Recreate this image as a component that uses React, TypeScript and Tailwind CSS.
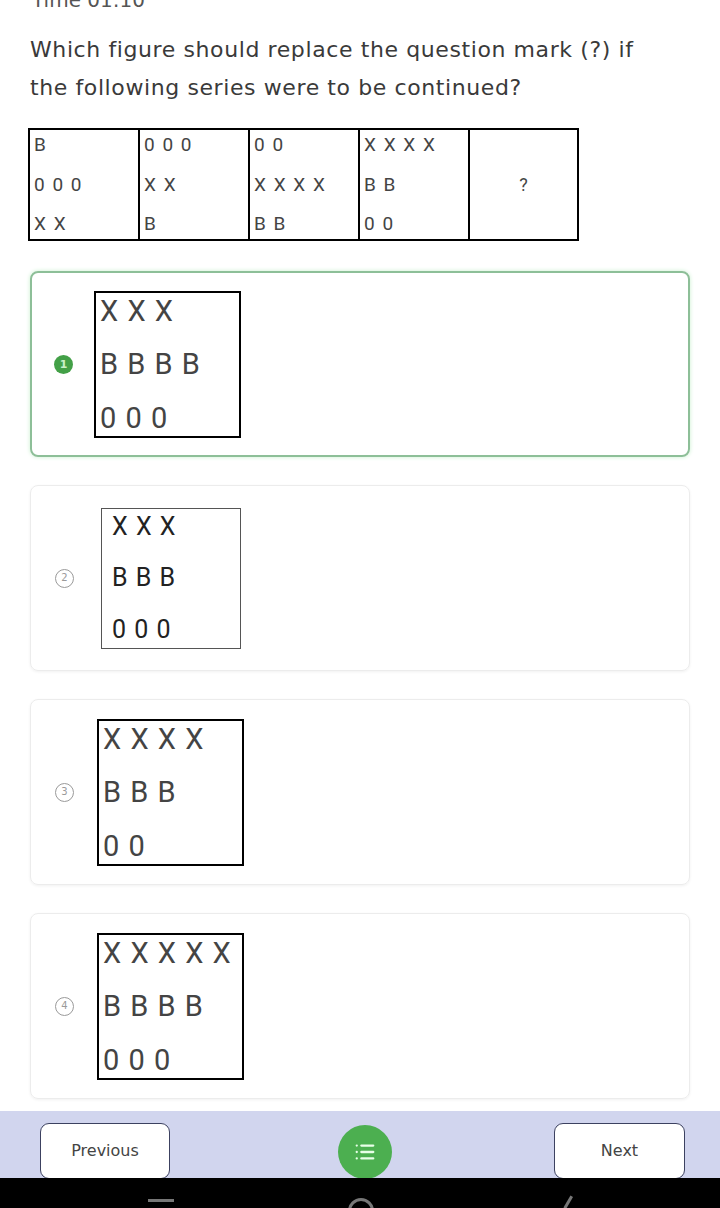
import { List } from "lucide-react";

const series = [
  ["B", "0 0 0", "X X"],
  ["0 0 0", "X X", "B"],
  ["0 0", "X X X X", "B B"],
  ["X X X X", "B B", "0 0"],
];

const options = [
  { n: 1, rows: ["X X X", "B B B B", "0 0 0"], selected: true },
  { n: 2, rows: ["X X X", "B B B", "0 0 0"], selected: false },
  { n: 3, rows: ["X X X X", "B B B", "0 0"], selected: false },
  { n: 4, rows: ["X X X X X", "B B B B", "0 0 0"], selected: false },
];

function Radio({ n, selected }: { n: number; selected: boolean }) {
  if (selected) {
    return (
      <div className="w-[19px] h-[19px] rounded-full bg-[#43a047] flex items-center justify-center text-[11px] font-bold text-[#c8f0c8] leading-none">
        {n}
      </div>
    );
  }
  return (
    <div className="w-[19px] h-[19px] rounded-full border-[1.5px] border-[#9a9a9a] flex items-center justify-center text-[10px] text-[#9a9a9a] leading-none">
      {n}
    </div>
  );
}

export default function App() {
  return (
    <div className="w-[720px] h-[1208px] bg-white flex flex-col overflow-hidden" style={{ fontFamily: "'DejaVu Sans', 'Noto Sans', sans-serif" }}>
      <div className="h-[8px] overflow-hidden pl-[32px]">
        <div className="-mt-[15px] text-[20px] text-[#555]">Time 01:10</div>
      </div>

      <p className="mt-[23px] pl-[30px] w-[660px] text-[22px] leading-[38px] text-[#3a3a3a] tracking-[0.6px]">
        Which figure should replace the question mark (?) if the following series were to be continued?
      </p>

      <div className="ml-[28px] mt-[21px] w-[551px] h-[113px] border-2 border-black flex" style={{ fontFamily: "Roboto, 'Liberation Sans', sans-serif" }}>
        {series.map((col, i) => (
          <div key={i} className="w-[110px] border-r-2 border-black flex flex-col justify-between pl-[4px] text-[19px] leading-[30px] text-[#444]">
            {col.map((t, j) => (
              <span key={j} className="tracking-[1.5px]">{t}</span>
            ))}
          </div>
        ))}
        <div className="flex-1 flex items-center justify-center text-[18px] text-[#444]">?</div>
      </div>

      <div className="mt-[30px] flex flex-col gap-[28px] px-[30px]">
        {options.map((o) => (
          <div
            key={o.n}
            className={
              o.selected
                ? "h-[186px] rounded-[8px] border-2 border-[#8dbf98] shadow-[0_0_4px_#c9f0cf] flex items-center pl-[22px]"
                : "h-[186px] rounded-[8px] border border-[#ececec] shadow-[0_1px_3px_rgba(0,0,0,0.06)] flex items-center pl-[24px]"
            }
          >
            <Radio n={o.n} selected={o.selected} />
            <div
              className={
                o.selected
                  ? "ml-[21px] w-[147px] h-[147px] border-2 border-black flex flex-col justify-between pl-[4px] text-[29px] leading-[36px] text-[#444]"
                  : o.n === 2
                  ? "ml-[27px] w-[140px] h-[141px] border-[1.5px] border-[#555] flex flex-col justify-between pl-[10px] text-[25px] leading-[36px] text-[#222]"
                  : "ml-[23px] w-[147px] h-[147px] border-2 border-black flex flex-col justify-between pl-[4px] text-[29px] leading-[36px] text-[#444]"
              }
              style={{ fontFamily: "Roboto, 'Liberation Sans', sans-serif" }}
            >
              {o.rows.map((r, j) => (
                <span key={j} className="tracking-[1px] whitespace-nowrap">{r}</span>
              ))}
            </div>
          </div>
        ))}
      </div>

      <div className="mt-[12px] h-[67px] bg-[#d1d5ee] flex items-start justify-between pl-[40px] pr-[35px] pt-[12px]">
        <button className="w-[130px] h-[56px] rounded-[9px] bg-white border-[1.5px] border-[#3c4160] text-[16px] text-[#444]">
          Previous
        </button>
        <div className="ml-[5px] mt-[2px] w-[54px] h-[54px] rounded-full bg-[#4caf50] flex items-center justify-center">
          <List size={22} color="#e8ffe8" strokeWidth={2.5} />
        </div>
        <button className="w-[131px] h-[56px] rounded-[9px] bg-white border-[1.5px] border-[#3c4160] text-[16px] text-[#444]">
          Next
        </button>
      </div>

      <div className="flex-1 bg-black relative overflow-hidden">
        <div className="absolute left-[148px] top-[21px] w-[26px] h-[20px] border-t-[3px] border-[#777]" />
        <div className="absolute left-[348px] top-[20px] w-[26px] h-[26px] rounded-full border-[3px] border-[#777]" />
        <div className="absolute left-[566px] top-[20px] w-[14px] h-[14px] border-l-[3px] border-[#777] rotate-[30deg]" />
      </div>
    </div>
  );
}
